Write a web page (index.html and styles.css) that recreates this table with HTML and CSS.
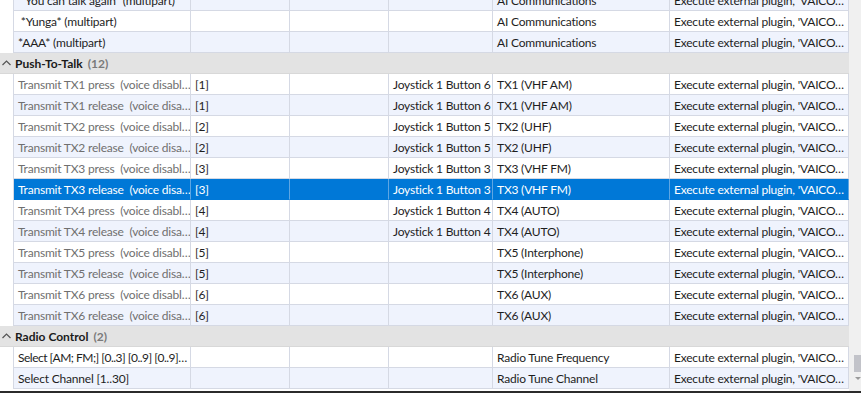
FILE: index.html
```html
<!DOCTYPE html>
<html>
<head>
<meta charset="utf-8">
<link rel="stylesheet" href="styles.css">
</head>
<body>
<div class="window">
  <div class="view">
    <div class="list">
      <div class="row alt">
        <div class="cell"> "You can talk again" (multipart)</div><div class="cell"></div><div class="cell"></div><div class="cell"></div><div class="cell">AI Communications</div><div class="cell">Execute external plugin, 'VAICO…</div>
      </div>
      <div class="row">
        <div class="cell"> *Yunga* (multipart)</div><div class="cell"></div><div class="cell"></div><div class="cell"></div><div class="cell">AI Communications</div><div class="cell">Execute external plugin, 'VAICO…</div>
      </div>
      <div class="row alt">
        <div class="cell">*AAA* (multipart)</div><div class="cell"></div><div class="cell"></div><div class="cell"></div><div class="cell">AI Communications</div><div class="cell">Execute external plugin, 'VAICO…</div>
      </div>

      <div class="group">
        <svg class="chev" width="9" height="6" viewBox="0 0 9 6"><polyline points="0.5,5 4.5,1 8.5,5" fill="none" stroke="#555" stroke-width="1.2"/></svg>
        <span class="gname">Push-To-Talk</span><span class="gcount">(12)</span>
      </div>

      <div class="row">
        <div class="cell dim">Transmit TX1 press  (voice disabl…</div><div class="cell">[1]</div><div class="cell"></div><div class="cell">Joystick 1 Button 6</div><div class="cell">TX1 (VHF AM)</div><div class="cell">Execute external plugin, 'VAICO…</div>
      </div>
      <div class="row alt">
        <div class="cell dim">Transmit TX1 release  (voice disa…</div><div class="cell">[1]</div><div class="cell"></div><div class="cell">Joystick 1 Button 6</div><div class="cell">TX1 (VHF AM)</div><div class="cell">Execute external plugin, 'VAICO…</div>
      </div>
      <div class="row">
        <div class="cell dim">Transmit TX2 press  (voice disabl…</div><div class="cell">[2]</div><div class="cell"></div><div class="cell">Joystick 1 Button 5</div><div class="cell">TX2 (UHF)</div><div class="cell">Execute external plugin, 'VAICO…</div>
      </div>
      <div class="row alt">
        <div class="cell dim">Transmit TX2 release  (voice disa…</div><div class="cell">[2]</div><div class="cell"></div><div class="cell">Joystick 1 Button 5</div><div class="cell">TX2 (UHF)</div><div class="cell">Execute external plugin, 'VAICO…</div>
      </div>
      <div class="row">
        <div class="cell dim">Transmit TX3 press  (voice disabl…</div><div class="cell">[3]</div><div class="cell"></div><div class="cell">Joystick 1 Button 3</div><div class="cell">TX3 (VHF FM)</div><div class="cell">Execute external plugin, 'VAICO…</div>
      </div>
      <div class="row selected">
        <div class="cell">Transmit TX3 release  (voice disa…</div><div class="cell">[3]</div><div class="cell"></div><div class="cell">Joystick 1 Button 3</div><div class="cell">TX3 (VHF FM)</div><div class="cell">Execute external plugin, 'VAICO…</div>
      </div>
      <div class="row">
        <div class="cell dim">Transmit TX4 press  (voice disabl…</div><div class="cell">[4]</div><div class="cell"></div><div class="cell">Joystick 1 Button 4</div><div class="cell">TX4 (AUTO)</div><div class="cell">Execute external plugin, 'VAICO…</div>
      </div>
      <div class="row alt">
        <div class="cell dim">Transmit TX4 release  (voice disa…</div><div class="cell">[4]</div><div class="cell"></div><div class="cell">Joystick 1 Button 4</div><div class="cell">TX4 (AUTO)</div><div class="cell">Execute external plugin, 'VAICO…</div>
      </div>
      <div class="row">
        <div class="cell dim">Transmit TX5 press  (voice disabl…</div><div class="cell">[5]</div><div class="cell"></div><div class="cell"></div><div class="cell">TX5 (Interphone)</div><div class="cell">Execute external plugin, 'VAICO…</div>
      </div>
      <div class="row alt">
        <div class="cell dim">Transmit TX5 release  (voice disa…</div><div class="cell">[5]</div><div class="cell"></div><div class="cell"></div><div class="cell">TX5 (Interphone)</div><div class="cell">Execute external plugin, 'VAICO…</div>
      </div>
      <div class="row">
        <div class="cell dim">Transmit TX6 press  (voice disabl…</div><div class="cell">[6]</div><div class="cell"></div><div class="cell"></div><div class="cell">TX6 (AUX)</div><div class="cell">Execute external plugin, 'VAICO…</div>
      </div>
      <div class="row alt">
        <div class="cell dim">Transmit TX6 release  (voice disa…</div><div class="cell">[6]</div><div class="cell"></div><div class="cell"></div><div class="cell">TX6 (AUX)</div><div class="cell">Execute external plugin, 'VAICO…</div>
      </div>

      <div class="group">
        <svg class="chev" width="9" height="6" viewBox="0 0 9 6"><polyline points="0.5,5 4.5,1 8.5,5" fill="none" stroke="#555" stroke-width="1.2"/></svg>
        <span class="gname">Radio Control</span><span class="gcount">(2)</span>
      </div>

      <div class="row">
        <div class="cell tight">Select [AM; FM;] [0..3] [0..9] [0..9]…</div><div class="cell"></div><div class="cell"></div><div class="cell"></div><div class="cell">Radio Tune Frequency</div><div class="cell">Execute external plugin, 'VAICO…</div>
      </div>
      <div class="row alt">
        <div class="cell">Select Channel [1..30]</div><div class="cell"></div><div class="cell"></div><div class="cell"></div><div class="cell">Radio Tune Channel</div><div class="cell">Execute external plugin, 'VAICO…</div>
      </div>
    </div>
    <div class="scrollbar">
      <div class="thumb"></div>
      <div class="arrow"></div>
    </div>
  </div>
  <div class="edge"></div>
</div>
</body>
</html>
```
FILE: styles.css
```css
* { box-sizing: border-box; }
html, body {
  margin: 0;
  padding: 0;
  width: 861px;
  height: 393px;
  overflow: hidden;
  background: #ffffff;
}
body {
  font-family: Lato, "Noto Sans", sans-serif;
  font-size: 12px;
  letter-spacing: -0.2px;
  color: #1e1e1e;
}
.window {
  display: flex;
  flex-direction: column;
  height: 393px;
}
.view {
  display: flex;
  height: 391px;
  overflow: hidden;
}
.list {
  width: 849px;
  flex: none;
  margin-top: -10px;
  display: flex;
  flex-direction: column;
}
.row {
  display: grid;
  grid-template-columns: 177px 99px 99px 104px 177px 179px;
  height: 21px;
  margin-left: 13px;
  border-left: 1px solid #d5d9e4;
  background: #ffffff;
}
.row.alt { background: #eff3fd; }
.cell {
  border-right: 1px solid #d5d9e4;
  border-bottom: 1px solid #d5d9e4;
  padding: 1px 4px 0 4px;
  line-height: 19px;
  white-space: pre;
  overflow: hidden;
  text-overflow: clip;
}
.cell.tight { letter-spacing: -0.5px; padding-right: 2px; }
.cell.dim { color: #6f6f6f; }
.row.selected { background: #0078d7; }
.row.selected .cell {
  color: #ffffff;
  border-right-color: #5ea6e3;
  border-bottom-color: #0078d7;
}
.group {
  display: flex;
  align-items: center;
  height: 21px;
  background: #e3e3e3;
  border-bottom: 1px solid #d8d8d8;
  padding-left: 2px;
  padding-top: 1px;
}
.chev { margin-right: 4px; margin-top: -2px; }
.gname { font-weight: bold; color: #1a1a1a; letter-spacing: 0; }
.gcount { color: #7a7a7a; margin-left: 5px; font-weight: bold; letter-spacing: 0; }
.scrollbar {
  flex: 1;
  position: relative;
  background: #f0f0f0;
}
.thumb {
  position: absolute;
  left: 5px;
  right: 0;
  top: 355px;
  height: 17px;
  background: #c2c3c9;
}
.arrow {
  position: absolute;
  left: 6px;
  top: 377px;
  width: 0;
  height: 0;
  border-left: 3px solid transparent;
  border-right: 3px solid transparent;
  border-top: 3px solid #9a9a9a;
}
.edge {
  height: 2px;
  background: #2b2b2b;
}
```
